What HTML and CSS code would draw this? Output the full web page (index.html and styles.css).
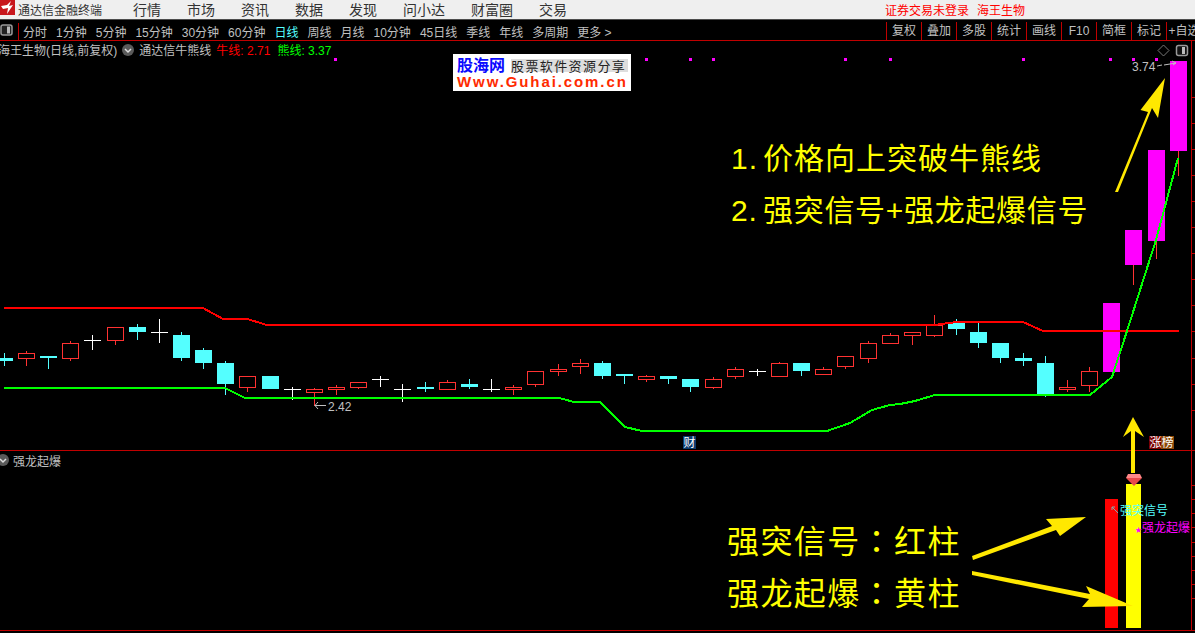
FILE: index.html
```html
<!DOCTYPE html>
<html>
<head>
    <meta charset="utf-8">
    <link rel="stylesheet" href="styles.css">
    <title>通达信金融终端</title>
</head>
<body>
    <header class="titlebar">
        <svg class="appLogo" width="15" height="15" viewBox="0 0 15 15">
            <rect width="15" height="15" fill="#c8171d"/>
            <path d="M1 6 L7 5 L11 1 L9 6 L13 5 L7 14 L8 8 L3 9 Z" fill="#fff"/>
        </svg>
        <span class="appName">通达信金融终端</span>
        <nav class="menu">
            <a href="#">行情</a>
            <a href="#">市场</a>
            <a href="#">资讯</a>
            <a href="#">数据</a>
            <a href="#">发现</a>
            <a href="#">问小达</a>
            <a href="#">财富圈</a>
            <a href="#">交易</a>
        </nav>
        <div class="loginInfo">
            <span>证券交易未登录</span>
            <span>海王生物</span>
        </div>
    </header>

    <div class="toolbar">
        <svg class="sideToggle" width="13" height="12" viewBox="0 0 13 12">
            <rect x="1" y="1" width="11" height="10" rx="2" fill="#222" stroke="#999" stroke-width="1.5"/>
            <rect x="7" y="2.5" width="3" height="7" fill="#bbb"/>
        </svg>
        <div class="periods">
            <a href="#">分时</a>
            <a href="#">1分钟</a>
            <a href="#">5分钟</a>
            <a href="#">15分钟</a>
            <a href="#">30分钟</a>
            <a href="#">60分钟</a>
            <a href="#" class="active">日线</a>
            <a href="#">周线</a>
            <a href="#">月线</a>
            <a href="#">10分钟</a>
            <a href="#">45日线</a>
            <a href="#">季线</a>
            <a href="#">年线</a>
            <a href="#">多周期</a>
            <a href="#">更多 &gt;</a>
        </div>
        <div class="tools">
            <a href="#">复权</a>
            <a href="#">叠加</a>
            <a href="#">多股</a>
            <a href="#">统计</a>
            <a href="#">画线</a>
            <a href="#">F10</a>
            <a href="#">简框</a>
            <a href="#">标记</a>
            <a href="#">+自选</a>
        </div>
    </div>

    <main class="chart">
        <section class="pane paneMain">
            <div class="paneHead shifted">
                <span>海王生物(日线,前复权)</span>
                <svg class="chevron" width="12" height="12" viewBox="0 0 12 12">
                    <circle cx="6" cy="6" r="6" fill="#5a5a5a"/>
                    <path d="M3 5 L6 8 L9 5" fill="none" stroke="#ddd" stroke-width="1.5"/>
                </svg>
                <span>通达信牛熊线</span>
                <span class="red">牛线: 2.71</span>
                <span class="green">熊线: 3.37</span>
            </div>
        </section>
        <section class="pane paneSub">
            <div class="paneHead subHead">
                <svg class="chevron" width="12" height="12" viewBox="0 0 12 12">
                    <circle cx="6" cy="6" r="6" fill="#5a5a5a"/>
                    <path d="M3 5 L6 8 L9 5" fill="none" stroke="#ddd" stroke-width="1.5"/>
                </svg>
                <span>强龙起爆</span>
            </div>
        </section>

        <!-- drawing layer, coordinates are page pixels -->
        <svg class="canvas" width="1195" height="592" viewBox="0 41 1195 592">
            <g id="dots" class="dots"></g>
            <g id="ticks" class="ticks"></g>
            <rect class="axis" x="1191" y="41" width="1" height="590"/>
            <g id="candles"></g>

            <polyline class="lineRed" points="4,308 203,308 223,319 247,319 267,325 935,325 941,324 957,322 1023,322 1043,331 1179,331"/>
            <polyline class="lineGreen" points="4,388 225,388 245,398 559,398 574,402 600,402 625,427 642,431 827,431 850,423 872,410 890,405 900,404 915,401 935,395 1090,395 1112,377 1127,331 1156,240 1178,158"/>

            <!-- price marks -->
            <text class="mark" x="1132" y="71">3.74</text>
            <path class="markLine" d="M1157 66 L1162 65 M1164 65 L1176 63 M1172 61 L1176 63 L1173 65"/>
            <path class="markLine" d="M326 405.5 L315 405.5 M318 402 L315 405.5 L318 409"/>
            <text class="mark" x="328" y="411">2.42</text>

            <!-- top right small icons -->
            <path class="diamond" d="M1163.5 45 L1169 50.500 L1163.500 56 L1158 50.500 Z"/>
            <rect class="panelIcon" x="1176.500" y="45.500" width="11" height="10" rx="2"/>
            <rect class="panelIconBar" x="1182" y="47" width="3" height="7"/>

            <!-- notes drawn on the chart -->
            <text class="note" x="731" y="169">1.<tspan x="763">价格向上突破牛熊线</tspan></text>
            <text class="note tight" x="731" y="221">2.<tspan x="763">强突信号+强龙起爆信号</tspan></text>
            <text class="noteBig" x="727" y="553">强突信号<tspan class="midColon">：</tspan>红柱</text>
            <text class="noteBig" x="727" y="605">强龙起爆<tspan class="midColon">：</tspan>黄柱</text>

            <!-- sub pane bars -->
            <rect class="barRed" x="1105" y="499" width="13" height="129"/>
            <rect class="barYellow" x="1126" y="484" width="15" height="144"/>
            <text class="sigCyan" x="1120" y="515">强突信号</text>
            <path class="sigArrow" d="M1118 513 L1112 507 M1112 510 L1112 507 L1115 507"/>
            <text class="sigPink" x="1135" y="532"><tspan class="star">★</tspan>强龙起爆</text>

            <!-- badges -->
            <rect class="badgeBlue" x="683" y="436" width="13" height="13"/>
            <text class="badgeText" x="683.500" y="447">财</text>
            <rect class="badgeRed" x="1149" y="436" width="13" height="13"/>
            <rect class="badgeBrown" x="1161" y="436" width="13" height="13"/>
            <text class="badgeText" x="1149.500" y="447">涨</text>
            <text class="badgeText" x="1161.500" y="447">榜</text>

            <!-- hand drawn arrows -->
            <path class="arrowFill" d="M1115 192 L1148 112 L1140.500 110 L1165 78 L1158 118 L1152 108 L1118 192 Z"/>
            <path class="arrowFill" d="M1131 473 L1131 431 L1123 437 L1133 417 L1144 437 L1135 431 L1135 473 Z"/>
            <path class="arrowFill" d="M972 556 L1052 526 L1046 519 L1086 517 L1060 536 L1056 530 L973 560 Z"/>
            <path class="arrowFill" d="M972 571 L1090 594 L1086 586 L1133 606 L1082 607 L1089 599 L972 575 Z"/>
            <polygon class="gemTop" points="1128,474 1140,474 1142,478 1126,478"/>
            <polygon class="gemBottom" points="1126,478 1142,478 1134,486"/>
        </svg>

        <div class="siteLogo">
            <div class="logoRow">
                <b class="logoName">股海网</b>
                <span class="logoTag">股票软件资源分享</span>
            </div>
            <div class="logoUrl">Www.Guhai.com.cn</div>
        </div>
    </main>

    <script src="chart.js"></script>
</body>
</html>
```

FILE: styles.css
```css
*{
    margin: 0px;
    padding: 0px;
    box-sizing: border-box;
}
html,body{
    height: 100%;
    overflow: hidden;
}
body{
    background-color: #000;
    font-family: "Liberation Sans", "Noto Sans CJK SC", sans-serif;
    font-size: 12px;
    color: #c0c0c0;
}
a{
    color: inherit;
    text-decoration: none;
    white-space: nowrap;
}

/* title bar */
.titlebar{
    display: flex;
    align-items: center;
    height: 20px;
    padding-bottom: 1px;
    background-color: #efefef;
    border-bottom: 1px solid #4d4d4d;
    color: #333;
}
.appLogo{
    flex-shrink: 0;
    align-self: flex-start;
}
.appName{
    margin-left: 3px;
    width: 115px;
    white-space: nowrap;
}
.menu{
    display: flex;
    gap: 26px;
    width: 752px;
    font-size: 14px;
}
.loginInfo{
    display: flex;
    gap: 8px;
    color: #f00;
    white-space: nowrap;
}

/* period tabs and tools */
.toolbar{
    display: flex;
    align-items: stretch;
    height: 21px;
    border-bottom: 1px solid #c00000;
    overflow: hidden;
}
.sideToggle{
    flex-shrink: 0;
    margin: 4px 5px 0 0;
}
.periods{
    display: flex;
    align-items: center;
    gap: 9px;
    width: 868px;
    padding-left: 4px;
    margin-top: 3px;
    margin-bottom: 1px;
    border-left: 1px solid #c00000;
    flex-shrink: 0;
    height: 17px;
}
.periods .active{
    color: #54ffff;
}
.tools{
    display: flex;
    flex-shrink: 0;
    margin-top: 2px;
}
.tools a{
    width: 35px;
    flex-shrink: 0;
    text-align: center;
    line-height: 18px;
    border-left: 1px solid #c00000;
}

/* chart area */
.chart{
    position: relative;
    height: 592px;
}
.pane{
    border-bottom: 1px solid #c00000;
}
.paneMain{
    height: 410px;
}
.paneSub{
    height: 180px;
}
.paneHead{
    position: relative;
    z-index: 1;
    display: flex;
    align-items: center;
    gap: 5px;
    height: 18px;
    white-space: nowrap;
}
.shifted{
    margin-left: -2px;
    padding-bottom: 1px;
}
.shifted .red{
    color: #f00;
}
.shifted .green{
    color: #0f0;
    margin-left: 2px;
}
.subHead{
    margin-left: -3px;
    gap: 4px;
}
.chevron{
    flex-shrink: 0;
}
.canvas{
    position: absolute;
    left: 0;
    top: 0;
}

/* svg parts */
.dots rect{ fill: #f0f; }
.ticks rect, .axis{ fill: #c00000; }
.upBody{ fill: none; stroke: #ff3232; stroke-width: 1; shape-rendering: crispEdges; }
.upWick{ fill: #ff3232; }
.downBody{ fill: #54ffff; }
.flat{ fill: #fff; }
.hotBody{ fill: #f0f; }
.lineRed, .lineGreen{
    fill: none;
    stroke-width: 2;
    shape-rendering: crispEdges;
}
.lineRed{ stroke: #f00; }
.lineGreen{ stroke: #0f0; }
.mark{
    fill: #c0c0c0;
    font-size: 12px;
}
.markLine{
    fill: none;
    stroke: #c0c0c0;
    stroke-width: 1;
}
.diamond{
    fill: none;
    stroke: #777;
}
.panelIcon{
    fill: #111;
    stroke: #999;
    stroke-width: 1.5;
}
.panelIconBar{ fill: #bbb; }
.note{
    fill: #ff0;
    font-size: 30px;
    letter-spacing: 1px;
}
.note.tight{
    letter-spacing: 0.7px;
}
.noteBig{
    fill: #ff0;
    font-size: 32px;
    letter-spacing: 1.4px;
}
.midColon{
    font-family: "Noto Sans CJK TC", sans-serif;
}
.barRed{ fill: #f00; }
.barYellow{ fill: #ff0; }
.sigCyan{
    fill: #54ffff;
    font-size: 12px;
}
.sigPink{
    fill: #f0f;
    font-size: 12px;
}
.star{
    font-size: 7px;
}
.sigArrow{
    fill: none;
    stroke: #8aa;
}
.badgeBlue{ fill: #0b3b6e; }
.badgeRed{ fill: #7a0000; }
.badgeBrown{ fill: #8b4a0a; }
.badgeText{
    fill: #fff;
    font-size: 12px;
}
.arrowFill{ fill: #ffe800; }
.gemTop{ fill: #f88; }
.gemBottom{ fill: #e84a4a; }

/* site stamp over the chart */
.siteLogo{
    position: absolute;
    left: 453px;
    top: 13px;
    width: 178px;
    height: 37px;
    padding: 4px 3px 0 4px;
    background-color: #fff;
}
.logoRow{
    display: flex;
    align-items: center;
    gap: 6px;
    height: 15px;
}
.logoName{
    color: #0a0aff;
    font-size: 16px;
    line-height: 15px;
    white-space: nowrap;
}
.logoTag{
    flex: 1;
    background-color: #ddd;
    color: #222;
    font-family: "Noto Sans CJK SC", sans-serif;
    font-size: 13px;
    line-height: 13px;
    letter-spacing: 1.4px;
    white-space: nowrap;
}
.logoUrl{
    margin-top: 1px;
    color: #ff2a00;
    font-family: "Liberation Sans", sans-serif;
    font-weight: bold;
    font-size: 15px;
    line-height: 16px;
    letter-spacing: 1.9px;
    white-space: nowrap;
}
```

FILE: chart.js
```js
// x, kind, high, top, bottom, low  (page pixels)
// kind: u = up (hollow red), d = down (cyan), f = flat cross, h = limit up (magenta)
var candles = [
    [4,"d",353,358,361,366],[26,"u",351,353,358,366],[48,"d",356,356,358,369],[70,"u",341,343,358,361],
    [92,"f",335,340,340,350],[115,"u",327,327,340,345],[137,"d",324,327,332,340],[159,"f",319,332,332,343],
    [181,"d",332,335,358,361],[203,"d",348,350,363,369],[225,"d",361,363,384,395],[247,"u",376,376,387,392],
    [270,"d",376,376,389,389],[292,"f",387,389,389,400],[314,"u",388,389,392,406],[336,"u",385,387,389,395],
    [358,"u",382,382,387,389],[380,"f",376,379,379,387],[402,"f",384,389,389,402],[425,"d",382,387,389,392],
    [447,"u",380,382,389,389],[469,"d",379,384,387,389],[491,"f",379,389,389,392],[513,"u",385,387,389,395],
    [535,"u",371,371,384,387],[558,"u",364,369,371,376],[580,"u",359,363,366,374],[602,"d",361,363,376,379],
    [624,"d",374,374,376,384],[646,"u",375,376,379,382],[668,"d",376,376,379,384],[690,"d",379,379,387,392],
    [713,"u",377,379,387,389],[735,"u",367,369,376,379],[757,"f",369,371,371,376],[779,"u",362,363,376,376],
    [801,"d",363,363,371,376],[823,"u",367,369,374,374],[845,"u",356,356,366,369],[868,"u",341,343,358,363],
    [890,"u",333,335,343,343],[912,"u",332,332,335,345],[934,"u",315,325,335,337],[956,"d",319,323,329,335],
    [978,"d",323,332,343,348],[1000,"d",343,343,358,363],[1023,"d",353,358,361,366],[1045,"d",356,363,394,397],
    [1067,"u",380,387,389,392],[1089,"u",367,371,385,392],[1111,"h",303,303,372,372],[1133,"h",230,230,265,285],
    [1156,"h",150,150,241,259],[1178,"h",61,61,151,176]
];

function drawCandle(c){
    var x=c[0], kind=c[1], high=c[2], top=c[3], bottom=c[4], low=c[5];
    var left=x-8;
    var wick=`<rect class="${kind=="d"?"downBody":kind=="f"?"flat":"upWick"}" x="${x}" y="${high}" width="1" height="${low-high}"/>`;
    if(kind=="u"){
        return wick+`<rect x="${left}" y="${top}" width="17" height="${bottom-top}" fill="#000"/>`+
            `<rect class="upBody" x="${left+0.5}" y="${top+0.5}" width="16" height="${bottom-top}"/>`;
    }
    if(kind=="f"){
        return wick+`<rect class="flat" x="${left}" y="${top}" width="17" height="1"/>`;
    }
    return wick+`<rect class="${kind=="h"?"hotBody":"downBody"}" x="${left}" y="${top}" width="17" height="${bottom-top}"/>`;
}

document.getElementById("candles").innerHTML=candles.map(drawCandle).join("");

// limit up dots along the top of the chart
var dotXs=[334,645,689,712,844,889,1022,1109,1132,1155];
document.getElementById("dots").innerHTML=dotXs.map(function(x){
    return `<rect x="${x}" y="58" width="3" height="3"/>`;
}).join("");

// axis ticks
var html="";
for(var y=97;y<=410;y+=26.05){
    html+=`<rect x="1192" y="${Math.round(y)}" width="3" height="1"/>`;
}
for(var y2=484.7;y2<=600;y2+=14.2){
    html+=`<rect x="1192" y="${Math.round(y2)}" width="3" height="1"/>`;
}
document.getElementById("ticks").innerHTML=html;
```
